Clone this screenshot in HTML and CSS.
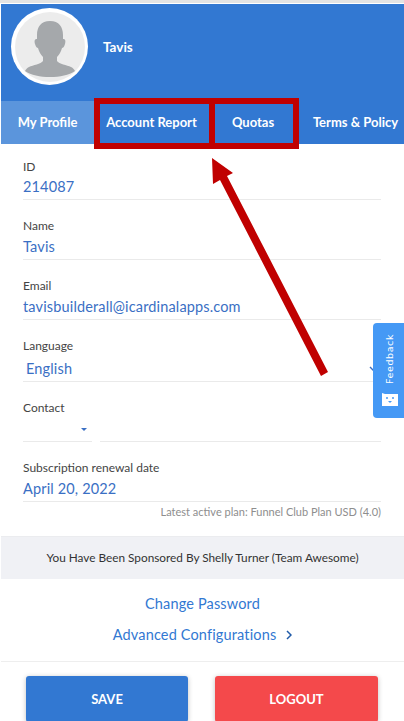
FILE: index.html
```html
<!DOCTYPE html>
<html lang="en">
<head>
    <meta charset="UTF-8">
    <meta name="viewport" content="width=device-width, initial-scale=1.0">
    <title>My Profile</title>
    <link rel="stylesheet" href="styles.css">
</head>
<body>

<div class="page">
    <div class="profile-head">
        <div class="avatar">
            <svg viewBox="0 0 70 70" width="70" height="70">
                <circle cx="35" cy="35" r="35" fill="#ececec"/>
                <path d="M35 9c-9 0-13 6-13 14v4c-2 0-3 1-2 5 1 3 2 4 3 4 1 4 3 7 5 9v4c-2 3-10 4-14 6-2 1-3 2-4 4 6 4 15 6 25 6s19-2 25-6c-1-2-2-3-4-4-4-2-12-3-14-6v-4c2-2 4-5 5-9 1 0 2-1 3-4 1-4 0-5-2-5v-4c0-8-4-14-13-14z" fill="#a5a8ab"/>
            </svg>
        </div>
        <div class="profile-name">Tavis</div>
    </div>

    <div class="tabs">
        <div class="tab active">My Profile</div>
        <div class="tab">Account Report</div>
        <div class="tab">Quotas</div>
        <div class="tab">Terms &amp; Policy</div>
    </div>

    <div class="form">
        <div class="field">
            <label>ID</label>
            <div class="value">214087</div>
        </div>
        <div class="field">
            <label>Name</label>
            <div class="value">Tavis</div>
        </div>
        <div class="field">
            <label>Email</label>
            <div class="value">tavisbuilderall@icardinalapps.com</div>
        </div>
        <div class="field language">
            <label>Language</label>
            <div class="value">English</div>
            <svg class="select-arrow" viewBox="0 0 12 7" width="12" height="7">
                <path d="M1 1l5 5 5-5" fill="none" stroke="#3a6fc4" stroke-width="1.4"/>
            </svg>
        </div>
        <div class="field contact">
            <label>Contact</label>
            <div class="contact-row">
                <div class="dial"><span class="caret"></span></div>
                <div class="phone"></div>
            </div>
        </div>
        <div class="field">
            <label>Subscription renewal date</label>
            <div class="value">April 20, 2022</div>
        </div>
        <div class="plan-note">Latest active plan: Funnel Club Plan USD (4.0)</div>
    </div>

    <div class="sponsor">You Have Been Sponsored By Shelly Turner (Team Awesome)</div>

    <div class="links">
        <a class="link">Change Password</a>
        <a class="link">Advanced Configurations
            <svg class="chevron" viewBox="0 0 6 10" width="6" height="10">
                <path d="M1 1l4 4-4 4" fill="none" stroke="#1f5aa8" stroke-width="1.5"/>
            </svg>
        </a>
    </div>

    <div class="actions">
        <button class="btn save">SAVE</button>
        <button class="btn logout">LOGOUT</button>
    </div>

    <!-- feedback tab -->
    <div class="feedback">
        <span class="feedback-text">Feedback</span>
        <svg viewBox="0 0 16 13" width="16" height="13">
            <path d="M0 0l3 1h13v12H0z" fill="#fff"/>
            <circle cx="5" cy="5" r="1" fill="#4599f5"/>
            <circle cx="11" cy="5" r="1" fill="#4599f5"/>
            <path d="M6 8h4l-2 2z" fill="#4599f5"/>
        </svg>
    </div>

    <!-- annotation drawn on top of the screenshot -->
    <div class="mark mark-report"></div>
    <div class="mark mark-quotas"></div>
    <svg class="arrow" viewBox="0 0 404 721" width="404" height="721">
        <path d="M212 158L233 173 227 176 328 372 321 376 220 180 213 184z" fill="#c00000"/>
    </svg>
</div>

</body>
</html>
```

FILE: styles.css
```css
* {
    box-sizing: border-box;
}

body {
    margin: 0;
    font-family: 'Lato', sans-serif;
    background: #fff;
}

.page {
    position: relative;
    width: 404px;
    height: 721px;
    overflow: hidden;
    padding: 4px 0 0 1px;
}

.page::before {
    content: "";
    position: absolute;
    top: 0;
    left: 0;
    right: 0;
    height: 3px;
    background: #e3e3e3;
}

.profile-head {
    display: flex;
    align-items: center;
    height: 97px;
    padding: 0 0 12px 10px;
    background: #3278d2;
}

.avatar {
    width: 77px;
    height: 77px;
    padding: 3.5px;
    background: #fff;
    border-radius: 50%;
}

.avatar svg {
    display: block;
}

.profile-name {
    margin-left: 15px;
    color: #fff;
    font-size: 13.5px;
    font-weight: 700;
}

.tabs {
    display: flex;
    height: 43px;
    background: #3278d2;
}

.tab {
    display: flex;
    align-items: center;
    justify-content: center;
    padding-bottom: 1px;
    color: #fff;
    font-size: 13px;
    font-weight: 700;
    white-space: nowrap;
}

.tab:nth-child(1) {
    width: 93px;
    background: #5b95dc;
}

.tab:nth-child(2) {
    width: 115px;
}

.tab:nth-child(3) {
    width: 88px;
}

.tab:nth-child(4) {
    flex: 1;
    padding-left: 10px;
}

.form {
    padding: 15px 23px 0 22px;
}

.field {
    position: relative;
    height: 60px;
    padding-top: 18px;
    border-bottom: 1px solid #eaeaea;
}

.field label {
    display: block;
    height: 19px;
    color: #444;
    font-size: 12px;
    line-height: 15px;
}

.value {
    color: #3a6fc4;
    font-size: 14.5px;
    line-height: 20px;
    letter-spacing: 0.15px;
}

.field:first-child {
    height: 41px;
    padding-top: 0;
}

.field:first-child label {
    height: 18px;
}

.language {
    height: 62px;
}

.language .value {
    padding: 2px 0 0 3px;
}

.select-arrow {
    position: absolute;
    right: 0;
    top: 46px;
}

.contact {
    border-bottom: 0;
}

.contact-row {
    display: flex;
    gap: 8px;
    height: 23px;
}

.dial {
    position: relative;
    width: 69px;
    border-bottom: 1px solid #eaeaea;
}

.caret {
    position: absolute;
    right: 5px;
    top: 9px;
    border-left: 3px solid transparent;
    border-right: 3px solid transparent;
    border-top: 3px solid #3a6fc4;
}

.phone {
    flex: 1;
    border-bottom: 1px solid #eaeaea;
}

.plan-note {
    margin-top: 2px;
    color: #8e8e8e;
    font-size: 11px;
    line-height: 15px;
    text-align: right;
}

.sponsor {
    height: 43px;
    margin-top: 17px;
    background: #f0f1f5;
    border-top: 1px solid #ebecef;
    color: #333;
    font-size: 11.8px;
    line-height: 42px;
    text-align: center;
}

.links {
    display: flex;
    flex-direction: column;
    align-items: center;
    gap: 11px;
    height: 83px;
    padding-top: 15px;
    border-bottom: 1px solid #eeeeee;
}

.link {
    color: #3278d2;
    font-size: 14.5px;
    line-height: 20px;
    letter-spacing: 0.15px;
}

.chevron {
    margin-left: 6px;
}

.actions {
    display: flex;
    gap: 27px;
    padding: 14px 0 0 25px;
}

.btn {
    width: 162px;
    height: 46px;
    border: none;
    border-radius: 3px;
    box-shadow: 0 1px 5px rgba(0, 0, 0, 0.25);
    color: #fff;
    font-family: inherit;
    font-size: 13px;
    font-weight: 700;
}

.save {
    background: #3278d2;
}

.logout {
    width: 163px;
    background: #f4494b;
}

.feedback {
    position: absolute;
    left: 373px;
    top: 323px;
    display: flex;
    flex-direction: column;
    align-items: center;
    gap: 9px;
    width: 31px;
    height: 95px;
    padding: 11px 0 0 2px;
    background: #4599f5;
    border-radius: 4px 0 0 4px;
    color: #fff;
}

.feedback-text {
    writing-mode: vertical-rl;
    transform: rotate(180deg);
    font-family: 'DejaVu Sans', sans-serif;
    font-size: 9.5px;
    letter-spacing: 0.6px;
}

.mark {
    position: absolute;
    top: 98px;
    height: 51px;
    border: 6px solid #c00000;
}

.mark-report {
    left: 94px;
    width: 121px;
}

.mark-quotas {
    left: 209px;
    width: 90px;
}

.arrow {
    position: absolute;
    left: 0;
    top: 0;
}
```
